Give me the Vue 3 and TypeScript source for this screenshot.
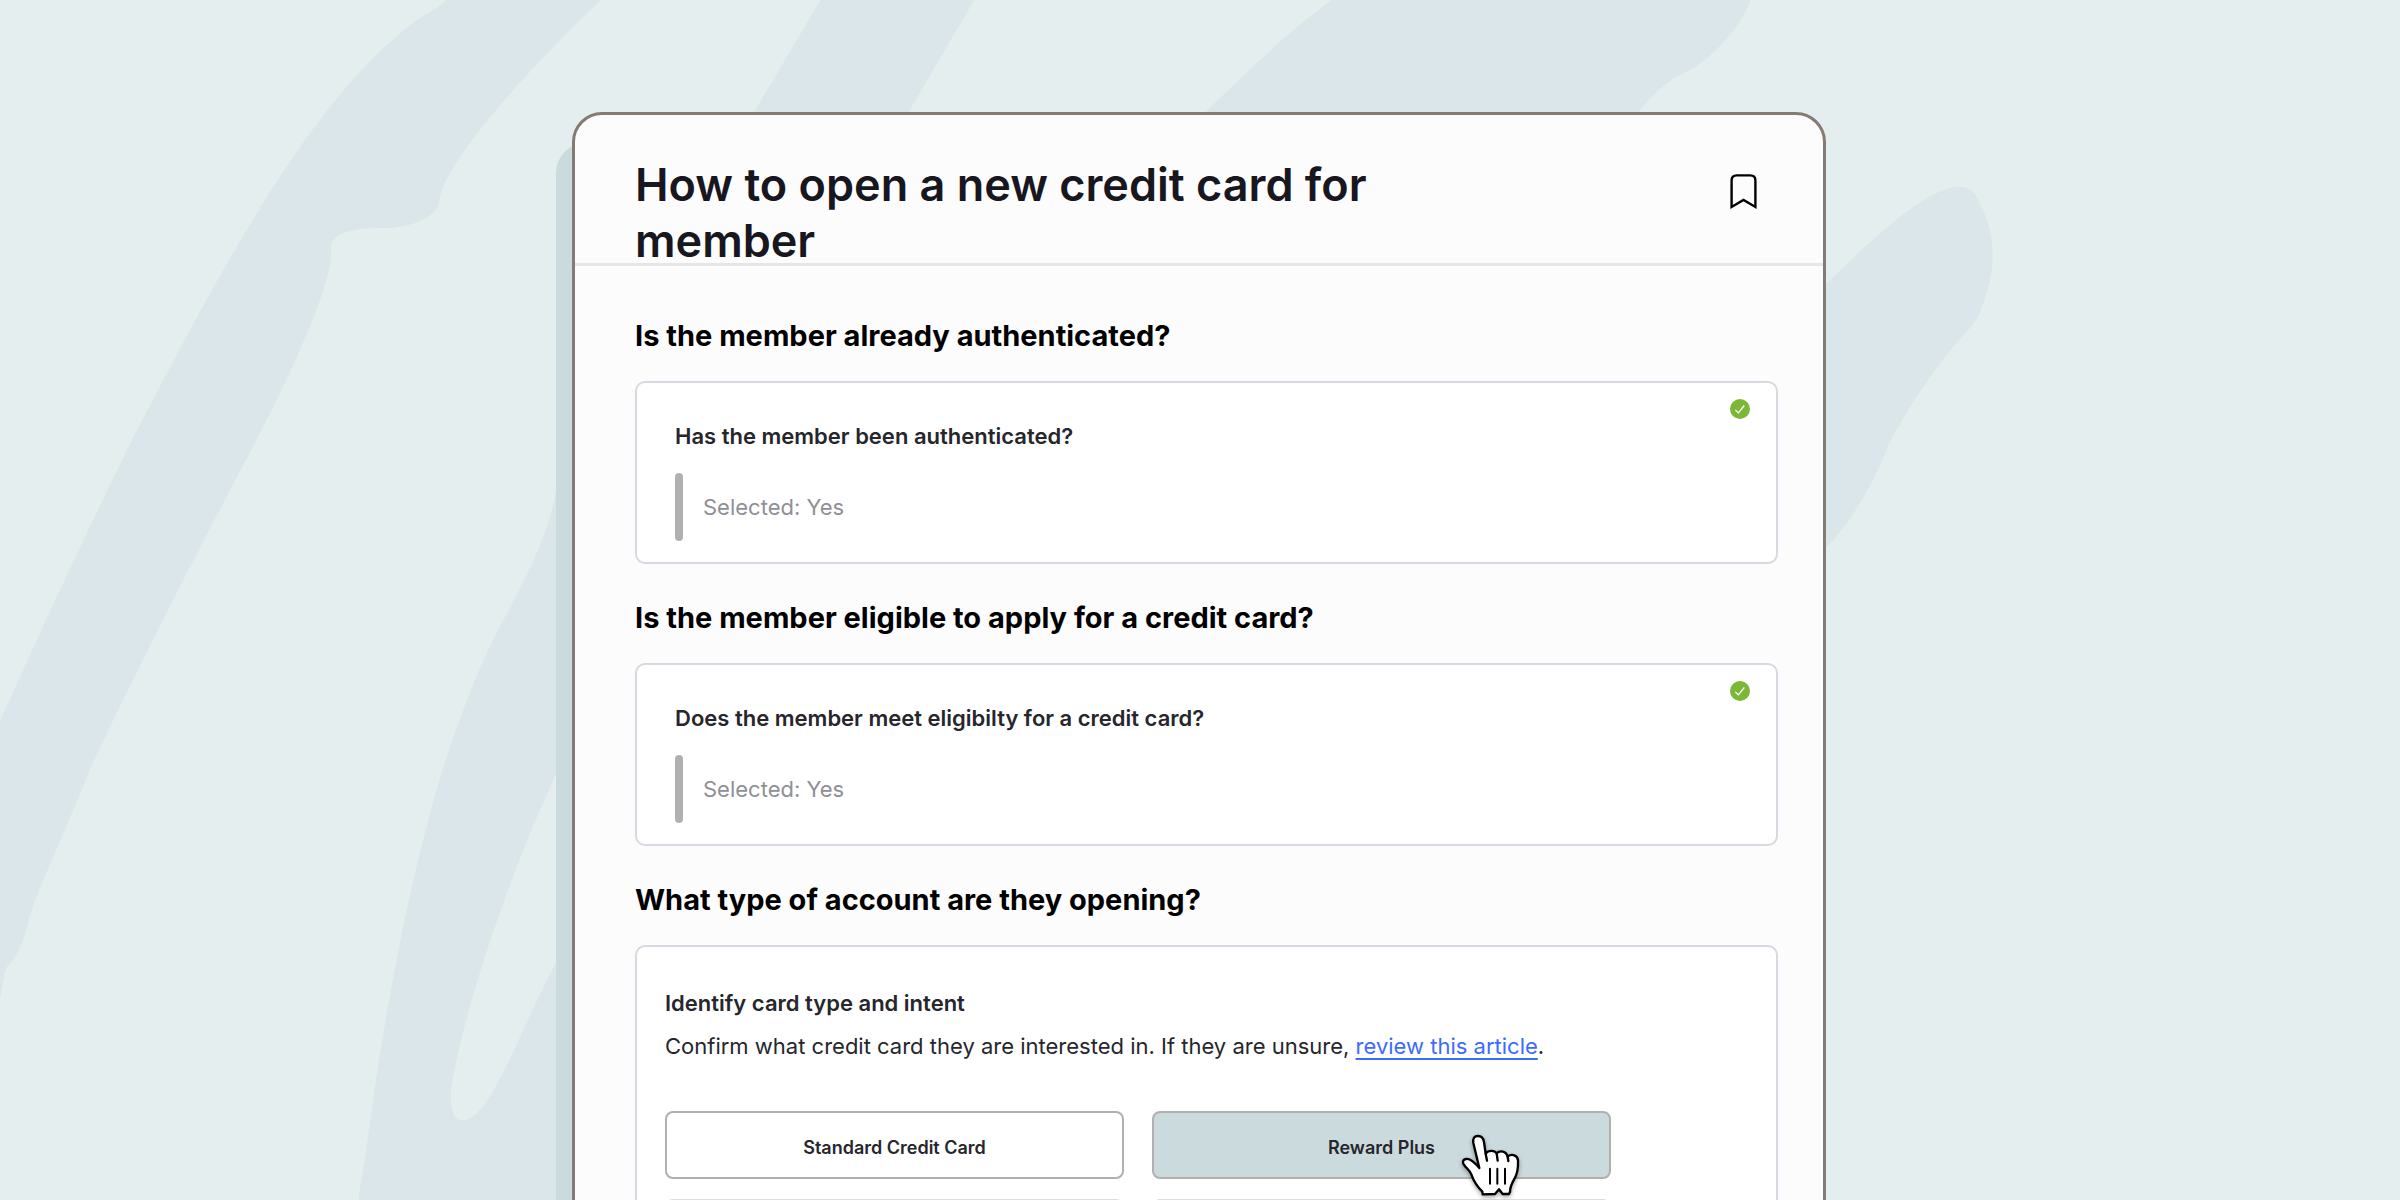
<script setup lang="ts">
interface AnsweredStep {
  id: string
  heading: string
  question: string
  answer: string
}

interface CardOption {
  id: string
  label: string
  active: boolean
}

const steps: AnsweredStep[] = [
  {
    id: 'authenticated',
    heading: 'Is the member already authenticated?',
    question: 'Has the member been authenticated?',
    answer: 'Selected: Yes',
  },
  {
    id: 'eligible',
    heading: 'Is the member eligible to apply for a credit card?',
    question: 'Does the member meet eligibilty for a credit card?',
    answer: 'Selected: Yes',
  },
]

const options: CardOption[] = [
  { id: 'standard', label: 'Standard Credit Card', active: false },
  { id: 'reward', label: 'Reward Plus', active: true },
]
</script>

<template>
  <div class="page">
    <svg class="backdrop" viewBox="0 0 3136 1568" preserveAspectRatio="xMidYMin slice" aria-hidden="true">
      <path d="M583 0C572 12 558 17 545 26C400 130 270 390 180 560C110 700 60 810 0 942V1304C3 1290 5 1270 10 1262C18 1255 28 1240 37 1205C45 1170 80 1100 120 1000C200 830 290 660 330 585C380 490 430 380 433 333C433 325 431 322 434 316C445 301 470 298 500 298C535 298 574 285 575 258C580 220 660 120 785 0Z" />
      <path d="M1072 0H1273L1187 147L1000 460H800L985 147Z" />
      <path d="M727 635C722 690 680 770 655 815C620 880 580 990 560 1070C520 1220 495 1380 483 1470C475 1530 470 1550 469 1568H800V1110L727 1257C710 1290 690 1330 675 1365C645 1430 625 1462 605 1464C597 1464 592 1460 590 1445C587 1430 590 1415 600 1370C630 1240 690 1090 727 1010L800 850V500Z" />
      <path d="M1740 0H2288C2272 40 2232 84 2188 102C2168 115 2154 130 2142 146L2080 240H1500L1576 146C1630 92 1690 36 1740 0Z" />
      <path d="M2388 369C2448 310 2518 246 2558 244C2575 243 2582 252 2590 272C2607 305 2607 350 2596 382C2588 408 2584 420 2571 432C2530 476 2495 530 2468 580C2448 632 2420 680 2388 714L2300 800V450Z" />
    </svg>

    <main class="card">
      <header class="card-header">
        <h1 class="title">How to open a new credit card for member</h1>
        <button class="bookmark" type="button" aria-label="Bookmark">
          <svg width="28" height="36" viewBox="0 0 28 36" fill="none" aria-hidden="true">
            <path d="M1.6 33V6.5Q1.6 1.4 6.7 1.4H20.3Q25.4 1.4 25.4 6.5V33L13.5 26Z" stroke="#000" stroke-width="2.4" stroke-linejoin="miter" />
          </svg>
        </button>
      </header>

      <div class="content">
        <section v-for="step in steps" :key="step.id" class="step">
          <h2 class="heading">{{ step.heading }}</h2>
          <div class="panel answered">
            <svg class="check" width="20" height="20" viewBox="0 0 20 20" fill="none" aria-hidden="true">
              <circle cx="10" cy="10" r="10" fill="#7bb837" />
              <path d="M5.3 10.9L8.4 13.9L14.3 6.5" stroke="#fff" stroke-width="1.3" />
            </svg>
            <h3 class="question">{{ step.question }}</h3>
            <p class="answer">{{ step.answer }}</p>
          </div>
        </section>

        <section class="step">
          <h2 class="heading">What type of account are they opening?</h2>
          <div class="panel choice">
            <h3 class="question">Identify card type and intent</h3>
            <p class="hint">
              Confirm what credit card they are interested in. If they are unsure,
              <a href="#article">review this article</a>.
            </p>
            <div class="options">
              <button
                v-for="option in options"
                :key="option.id"
                type="button"
                class="option"
                :class="{ active: option.active }"
              >
                {{ option.label }}
                <svg v-if="option.active" class="pointer" width="62" height="66" viewBox="120 98 186 198" aria-hidden="true">
                  <path
                    d="M160 128C158 113 163 107 174 107C185 107 190 113 192 125L197 160C205 149 223 149 230 159C239 149 259 152 263 169C276 158 293 166 294 180C295 200 290 225 282 238C275 250 270 262 270 275L267 281H248L237 267L225 281L188 282L187 274C175 262 160 240 154 222C150 212 142 206 134 196C126 188 127 178 138 176C148 174 160 182 178 203Z"
                    fill="#fff"
                    stroke="#000"
                    stroke-width="7"
                    stroke-linejoin="round"
                  />
                  <path d="M197 160L201 181M230 159L233 181M263 169L265 182" stroke="#000" stroke-width="7" stroke-linecap="round" />
                  <path d="M210 205V250M232 205V250M255 205V250" stroke="#000" stroke-width="6" stroke-linecap="round" />
                </svg>
              </button>
              <div class="option next"></div>
              <div class="option next"></div>
            </div>
          </div>
        </section>
      </div>
    </main>
  </div>
</template>

<style>
body {
  margin: 0;
}
</style>

<style scoped>
.page {
  position: relative;
  isolation: isolate;
  box-sizing: border-box;
  height: 100vh;
  padding: 112px 2px 0 0;
  overflow: hidden;
  background: #e5eeef;
  font-family: Inter, "Liberation Sans", sans-serif;
  color: #26262c;
}

.backdrop {
  position: absolute;
  z-index: -2;
  inset: 0;
  width: 100%;
  height: 100%;
  fill: #dae6ea;
}

.card {
  position: relative;
  box-sizing: border-box;
  max-width: 1254px;
  min-height: 100vh;
  margin: 0 auto;
  border: 3px solid #857b72;
  border-radius: 30px;
  background: #fcfcfc;
}

/* Offset slab behind the card */
.card::before {
  content: "";
  position: absolute;
  z-index: -1;
  top: 28px;
  left: -19px;
  width: 80px;
  height: 100%;
  border-radius: 30px;
  background: #cbdadd;
}

.card-header {
  display: flex;
  justify-content: space-between;
  align-items: flex-start;
  box-sizing: border-box;
  height: 151px;
  padding: 42px 65px 0 60px;
  border-bottom: 3px solid #e6e6e6;
}

.title {
  max-width: 760px;
  margin: 0;
  font-size: 45px;
  font-weight: 600;
  line-height: 56px;
  color: #18171f;
}

.bookmark {
  display: block;
  margin: 17px 0 0;
  padding: 0;
  border: 0;
  background: none;
}

.bookmark svg {
  display: block;
}

.content {
  display: flex;
  flex-direction: column;
  gap: 38px;
  padding: 54px 45px 60px 60px;
}

.step {
  display: flex;
  flex-direction: column;
  gap: 29px;
}

.heading {
  margin: 0;
  font-size: 29px;
  font-weight: 700;
  line-height: 32px;
  color: #000;
}

.panel {
  position: relative;
  box-sizing: border-box;
  border: 2px solid #d8d8e0;
  border-radius: 10px;
  background: #fff;
}

.answered {
  height: 183px;
  padding: 39px 38px 0;
}

.choice {
  padding: 42px 28px;
}

.check {
  position: absolute;
  top: 16px;
  right: 26px;
}

.question {
  margin: 0;
  font-size: 22px;
  font-weight: 600;
  line-height: 28px;
}

.answer {
  display: flex;
  align-items: center;
  margin: 23px 0 0;
  font-size: 22px;
  line-height: 28px;
  color: #8f8f96;
}

.answer::before {
  content: "";
  width: 8px;
  height: 68px;
  margin-right: 20px;
  border-radius: 4px;
  background: #b0b0b0;
}

.hint {
  margin: 15px 0 0;
  font-size: 22px;
  line-height: 28px;
}

.hint a {
  color: #3d6bff;
  text-decoration: underline;
  text-decoration-thickness: 2px;
  text-underline-offset: 4px;
}

.options {
  display: grid;
  grid-template-columns: repeat(2, 459px);
  gap: 20px 28px;
  margin-top: 51px;
}

.option {
  position: relative;
  box-sizing: border-box;
  height: 68px;
  padding: 5px 0 0;
  border: 2px solid #b0b0b0;
  border-radius: 8px;
  background: #fff;
  font-family: inherit;
  font-size: 18px;
  font-weight: 600;
  line-height: 24px;
  color: #26262c;
}

.active {
  z-index: 1;
  background: #cbdadd;
}

.next {
  border-color: #dedede;
}

.pointer {
  position: absolute;
  top: 20px;
  right: 87px;
  overflow: visible;
  filter: drop-shadow(0 2px 2px rgb(0 0 0 / 35%));
}
</style>
